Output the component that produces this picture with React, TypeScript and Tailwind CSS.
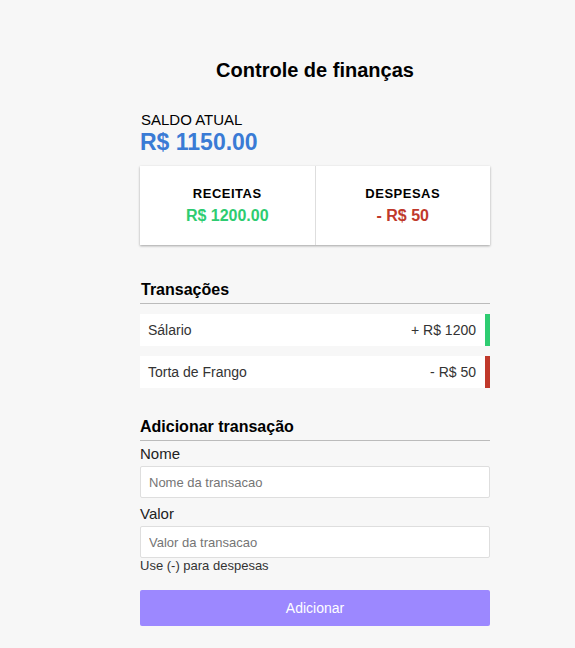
import React from "react";

export default function App() {
  return (
    <div className="min-h-[648px] w-full bg-[#f7f7f7] font-['Liberation_Sans',Arial,sans-serif] text-black">
      <div className="ml-[140px] w-[350px] pb-[22px]">
        <h1 className="pt-[58px] text-center text-[20px] font-bold leading-[24px]">Controle de finanças</h1>

        <div className="mt-[29px] pl-px text-[15px] leading-[18px] uppercase">Saldo atual</div>
        <div className="mt-[1px] text-[23px] font-bold leading-[24px] text-[#3a7bd5]">R$ 1150.00</div>

        <div className="mt-[12px] flex bg-white shadow-[0_1px_3px_rgba(0,0,0,0.12),0_1px_2px_rgba(0,0,0,0.24)]">
          <div className="flex-1 border-r border-[#dedede] pt-[20px] pb-[19px] text-center">
            <div className="text-[13px] font-bold leading-[16px] tracking-[0.5px]">RECEITAS</div>
            <div className="mt-[4px] text-[16px] font-bold leading-[20px] text-[#2ecc71]">R$ 1200.00</div>
          </div>
          <div className="flex-1 pt-[20px] pb-[19px] text-center">
            <div className="text-[13px] font-bold leading-[16px] tracking-[0.5px]">DESPESAS</div>
            <div className="mt-[4px] text-[16px] font-bold leading-[20px] text-[#c0392b]">- R$ 50</div>
          </div>
        </div>

        <h3 className="mt-[35px] border-b border-[#bbb] pb-[3px] pl-px text-[16px] font-bold leading-[20px]">Transações</h3>
        <ul className="mt-[10px] flex flex-col gap-[10px]">
          <li className="flex h-[32px] items-center justify-between border-r-[5px] border-[#2ecc71] bg-white pl-[8px] pr-[9px] text-[14px] text-[#333]">
            <span>Sálario</span>
            <span>+ R$ 1200</span>
          </li>
          <li className="flex h-[32px] items-center justify-between border-r-[5px] border-[#c0392b] bg-white pl-[8px] pr-[9px] text-[14px] text-[#333]">
            <span>Torta de Frango</span>
            <span>- R$ 50</span>
          </li>
        </ul>

        <h3 className="mt-[29px] border-b border-[#bbb] pb-[3px] text-[16px] font-bold leading-[20px]">Adicionar transação</h3>
        <div className="mt-[4px] text-[15px] leading-[18px] text-[#222]">Nome</div>
        <input
          type="text"
          placeholder="Nome da transacao"
          className="mt-[3px] block h-[32px] w-full rounded-[2px] border border-[#dedede] bg-white px-[8px] text-[13px] text-[#333] placeholder:text-[#757575] outline-none"
        />
        <div className="mt-[7px] text-[15px] leading-[18px] text-[#222]">Valor</div>
        <input
          type="text"
          placeholder="Valor da transacao"
          className="mt-[3px] block h-[32px] w-full rounded-[2px] border border-[#dedede] bg-white px-[8px] text-[13px] text-[#333] placeholder:text-[#757575] outline-none"
        />
        <div className="text-[13px] leading-[16px] text-[#333]">Use (-) para despesas</div>
        <button className="mt-[16px] block h-[36px] w-full rounded-[2px] bg-[#9c88ff] text-[14px] text-white">Adicionar</button>
      </div>
    </div>
  );
}
